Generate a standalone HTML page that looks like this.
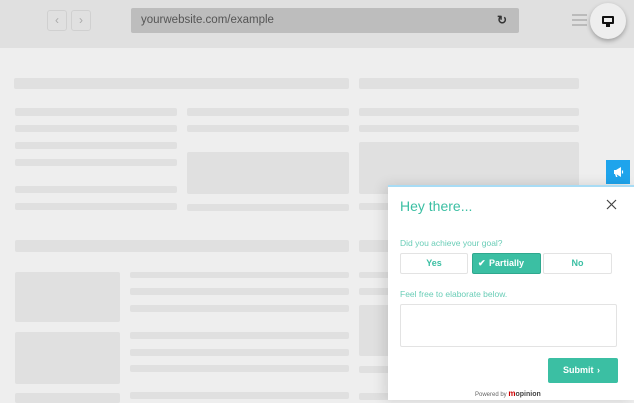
<!DOCTYPE html>
<html><head><style>
*{margin:0;padding:0;box-sizing:border-box}
body{width:634px;height:400px;overflow:hidden;background:#eeeeee;font-family:"Liberation Sans",sans-serif;position:relative}
.b{position:absolute;background:#e0e0e0;border-radius:2px}
#top{position:absolute;left:0;top:0;width:634px;height:48px;background:#e0e0e0}
.nav{position:absolute;top:10px;width:20px;height:21px;border:1px solid #d0d0d0;border-radius:3px;color:#aaa;font-size:12px;text-align:center;line-height:19px}
#url{position:absolute;left:131px;top:8px;width:388px;height:25px;background:#bdbdbd;border-radius:2px;color:#555;font-size:11.5px;line-height:25px;padding-left:10px}
#pop{position:absolute;left:388px;top:185px;width:246px;height:215px;background:#fff;border-top:2px solid #a8dcf5;box-shadow:-4px 0 12px rgba(0,0,0,.12)}
.t{position:absolute;color:#3bbfa3}
.opt{position:absolute;top:66px;height:21px;border:1px solid #e3e3e3;border-radius:2px;font-size:9px;font-weight:bold;color:#3bbfa3;text-align:center;line-height:19px}
</style></head><body>
<div id="top">
<div class="nav" style="left:47px">‹</div><div class="nav" style="left:71px">›</div>
<div id="url">yourwebsite.com/example<span style="position:absolute;right:12px;top:0;color:#333;font-weight:bold;font-size:12px">↻</span></div>
<div style="position:absolute;left:572px;top:14px;width:15px;height:2px;background:#bbb;box-shadow:0 5px 0 #bbb,0 10px 0 #bbb"></div>
<div style="position:absolute;left:590px;top:3px;width:36px;height:36px;border-radius:50%;background:#eee;box-shadow:0 2px 5px rgba(0,0,0,.3)">
<div style="position:absolute;left:12px;top:13px;width:12px;height:8px;border:2px solid #111;border-radius:1px"></div><div style="position:absolute;left:16px;top:21px;width:4px;height:3px;background:#111"></div></div>
</div>
<div class="b" style="left:14px;top:78px;width:335px;height:11px"></div>
<div class="b" style="left:359px;top:78px;width:220px;height:11px"></div>
<div class="b" style="left:15px;top:108px;width:162px;height:8px"></div>
<div class="b" style="left:15px;top:125px;width:162px;height:7px"></div>
<div class="b" style="left:15px;top:142px;width:162px;height:7px"></div>
<div class="b" style="left:15px;top:159px;width:162px;height:7px"></div>
<div class="b" style="left:15px;top:186px;width:162px;height:7px"></div>
<div class="b" style="left:15px;top:203px;width:162px;height:7px"></div>
<div class="b" style="left:187px;top:108px;width:162px;height:8px"></div>
<div class="b" style="left:187px;top:125px;width:162px;height:7px"></div>
<div class="b" style="left:187px;top:152px;width:162px;height:42px"></div>
<div class="b" style="left:187px;top:204px;width:162px;height:7px"></div>
<div class="b" style="left:359px;top:108px;width:220px;height:8px"></div>
<div class="b" style="left:359px;top:125px;width:220px;height:7px"></div>
<div class="b" style="left:359px;top:142px;width:220px;height:52px"></div>
<div class="b" style="left:359px;top:203px;width:220px;height:7px"></div>
<div class="b" style="left:15px;top:240px;width:334px;height:12px"></div>
<div class="b" style="left:359px;top:240px;width:220px;height:12px"></div>
<div class="b" style="left:15px;top:272px;width:105px;height:50px"></div>
<div class="b" style="left:15px;top:332px;width:105px;height:52px"></div>
<div class="b" style="left:15px;top:393px;width:105px;height:10px"></div>
<div class="b" style="left:130px;top:272px;width:219px;height:6px"></div>
<div class="b" style="left:130px;top:288px;width:219px;height:7px"></div>
<div class="b" style="left:130px;top:305px;width:219px;height:7px"></div>
<div class="b" style="left:130px;top:332px;width:219px;height:7px"></div>
<div class="b" style="left:130px;top:349px;width:219px;height:7px"></div>
<div class="b" style="left:130px;top:365px;width:219px;height:7px"></div>
<div class="b" style="left:130px;top:392px;width:219px;height:7px"></div>
<div class="b" style="left:359px;top:272px;width:220px;height:6px"></div>
<div class="b" style="left:359px;top:288px;width:220px;height:7px"></div>
<div class="b" style="left:359px;top:305px;width:220px;height:51px"></div>
<div class="b" style="left:359px;top:366px;width:220px;height:7px"></div>
<div class="b" style="left:359px;top:393px;width:220px;height:7px"></div>
<div style="position:absolute;left:606px;top:160px;width:24px;height:24px;background:#1ea4ec">
<svg width="24" height="24" viewBox="0 0 24 24"><path d="M8 10h2l5-3v10l-5-3H8z" fill="#fff"/><path d="M9 14l1 3h1.5l-1-3z" fill="#fff"/><path d="M16.5 10.5v3" stroke="#fff" stroke-width="1.2"/></svg></div>
<div id="pop">
<div class="t" style="left:12px;top:11px;font-size:14px">Hey there...</div>
<svg style="position:absolute;left:218px;top:12px" width="11" height="11" viewBox="0 0 11 11"><path d="M1 1L10 10M10 1L1 10" stroke="#444" stroke-width="1.2"/></svg>
<div class="t" style="left:12px;top:51px;font-size:8.5px;color:#6acdb7">Did you achieve your goal?</div>
<div class="opt" style="left:12px;width:68px">Yes</div>
<div class="opt" style="left:84px;width:69px;background:#3bbfa3;border-color:#2fa88e;color:#fff"><span style="position:absolute;left:5px">✔</span>Partially</div>
<div class="opt" style="left:155px;width:69px">No</div>
<div class="t" style="left:12px;top:102px;font-size:8.5px;color:#6acdb7">Feel free to elaborate below.</div>
<div style="position:absolute;left:12px;top:117px;width:217px;height:43px;border:1px solid #e3e3e3;border-radius:2px"></div>
<div style="position:absolute;left:160px;top:171px;width:70px;height:25px;background:#3bbfa3;border-radius:2px;color:#fff;font-size:9px;font-weight:bold;line-height:25px;white-space:nowrap"><span style="position:absolute;left:15px">Submit</span><span style="position:absolute;left:49px">›</span></div>
<div style="position:absolute;left:87px;top:202px;font-size:6px;color:#666;white-space:nowrap">Powered by <b style="color:#c00;font-size:8px">m</b><b style="color:#444;font-size:7px">opinion</b></div>
</div>
</body></html>
